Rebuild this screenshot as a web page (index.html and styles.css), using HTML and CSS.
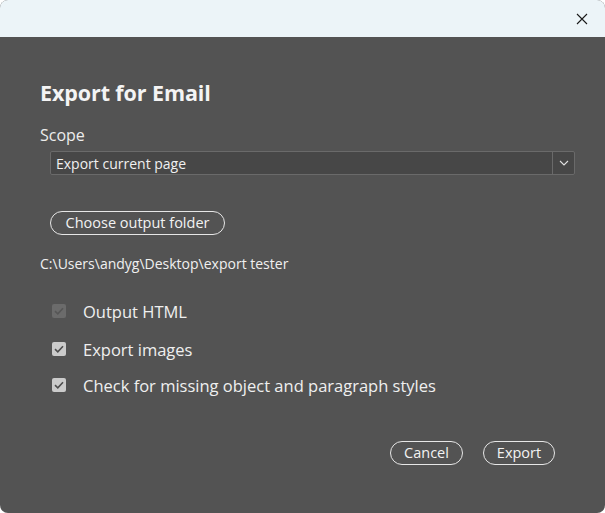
FILE: index.html
```html
<!DOCTYPE html>
<html lang="en">
<head>
    <meta charset="UTF-8">
    <meta name="viewport" content="width=device-width, initial-scale=1.0">
    <title>Export for Email</title>
    <link rel="stylesheet" href="styles.css">
</head>
<body>
<div class="window">
    <div class="title-bar">
        <div class="btn-close">
            <svg width="12" height="12" viewBox="0 0 12 12">
                <path d="M1 1 L11 11 M11 1 L1 11" stroke="#1a1a1a" stroke-width="1.1" fill="none"/>
            </svg>
        </div>
    </div>
    <div class="content">
        <div class="heading">Export for Email</div>
        <div class="label">Scope</div>
        <div class="select">
            <span class="select-text">Export current page</span>
            <span class="select-arrow">
                <svg width="10" height="6" viewBox="0 0 10 6">
                    <path d="M1 1 L5 5 L9 1" stroke="#e0e0e0" stroke-width="1.1" fill="none"/>
                </svg>
            </span>
        </div>
        <div class="folder-row">
            <div class="btn-pill btn-folder">Choose output folder</div>
        </div>
        <div class="path">C:\Users\andyg\Desktop\export tester</div>
        <div class="check-list">
            <div class="check-item disabled">
                <span class="box">
                    <svg width="10" height="8" viewBox="0 0 10 8"><path d="M1 4.2 L3.8 6.8 L9 1.2" stroke="currentColor" stroke-width="1.6" fill="none"/></svg>
                </span>
                <span class="check-label">Output HTML</span>
            </div>
            <div class="check-item">
                <span class="box">
                    <svg width="10" height="8" viewBox="0 0 10 8"><path d="M1 4.2 L3.8 6.8 L9 1.2" stroke="currentColor" stroke-width="1.6" fill="none"/></svg>
                </span>
                <span class="check-label">Export images</span>
            </div>
            <div class="check-item">
                <span class="box">
                    <svg width="10" height="8" viewBox="0 0 10 8"><path d="M1 4.2 L3.8 6.8 L9 1.2" stroke="currentColor" stroke-width="1.6" fill="none"/></svg>
                </span>
                <span class="check-label">Check for missing object and paragraph styles</span>
            </div>
        </div>
        <div class="footer">
            <div class="btn-pill btn-cancel">Cancel</div>
            <div class="btn-pill btn-export">Export</div>
        </div>
    </div>
</div>
</body>
</html>
```

FILE: styles.css
```css
body{
    margin: 0;
    padding: 0;
    background-color: #fff;
    font-family: "Open Sans", "Noto Sans", sans-serif;
}
.window{
    width: 605px;
    height: 513px;
    border-radius: 8px;
    overflow: hidden;
    display: flex;
    flex-direction: column;
    background-color: #535353;
}
.title-bar{
    height: 37px;
    background-color: #ecf4f8;
    display: flex;
    justify-content: flex-end;
    align-items: center;
}
.btn-close{
    width: 46px;
    height: 37px;
    display: flex;
    align-items: center;
    justify-content: center;
}
.content{
    flex: 1;
    padding: 41px 30px 0 40px;
    color: #ececec;
}
.heading{
    font-size: 21.5px;
    font-weight: bold;
    color: #f4f4f4;
    letter-spacing: -0.1px;
    line-height: 30px;
}
.label{
    margin-top: 16px;
    font-size: 16px;
    line-height: 22px;
}
.select{
    margin: 5px 0 0 10px;
    height: 22px;
    border: 1px solid #6a6a6a;
    border-radius: 2px;
    background-color: #474747;
    display: flex;
    align-items: center;
}
.select-text{
    flex: 1;
    padding-left: 5px;
    font-size: 14px;
    color: #f0f0f0;
}
.select-arrow{
    width: 21px;
    height: 22px;
    border-left: 1px solid #6a6a6a;
    display: flex;
    align-items: center;
    justify-content: center;
}
.folder-row{
    margin: 36px 0 0 10px;
    display: flex;
}
.btn-pill{
    border: 1px solid #e6e6e6;
    border-radius: 13px;
    height: 22px;
    line-height: 22px;
    font-size: 14.5px;
    color: #f2f2f2;
    text-align: center;
}
.btn-folder{
    width: 173px;
}
.path{
    margin-top: 20px;
    font-size: 14px;
    line-height: 18px;
    color: #f0f0f0;
}
.check-list{
    margin-top: 25px;
    display: flex;
    flex-direction: column;
    gap: 12px;
}
.check-item{
    display: flex;
    align-items: center;
    height: 26px;
}
.check-item:nth-child(3){
    margin-top: -2px;
}
.box{
    width: 14px;
    height: 14px;
    margin-left: 12px;
    border-radius: 2px;
    background-color: #cbcbcb;
    color: #4e4e4e;
    display: flex;
    align-items: center;
    justify-content: center;
}
.check-item.disabled .box{
    background-color: #6b6b6b;
    color: #565656;
}
.check-label{
    margin-left: 17px;
    font-size: 16.5px;
    color: #efefef;
}
.footer{
    margin-top: 43px;
    padding-right: 20px;
    display: flex;
    justify-content: flex-end;
    gap: 20px;
}
.btn-cancel{
    width: 71px;
}
.btn-export{
    width: 70px;
}
```
